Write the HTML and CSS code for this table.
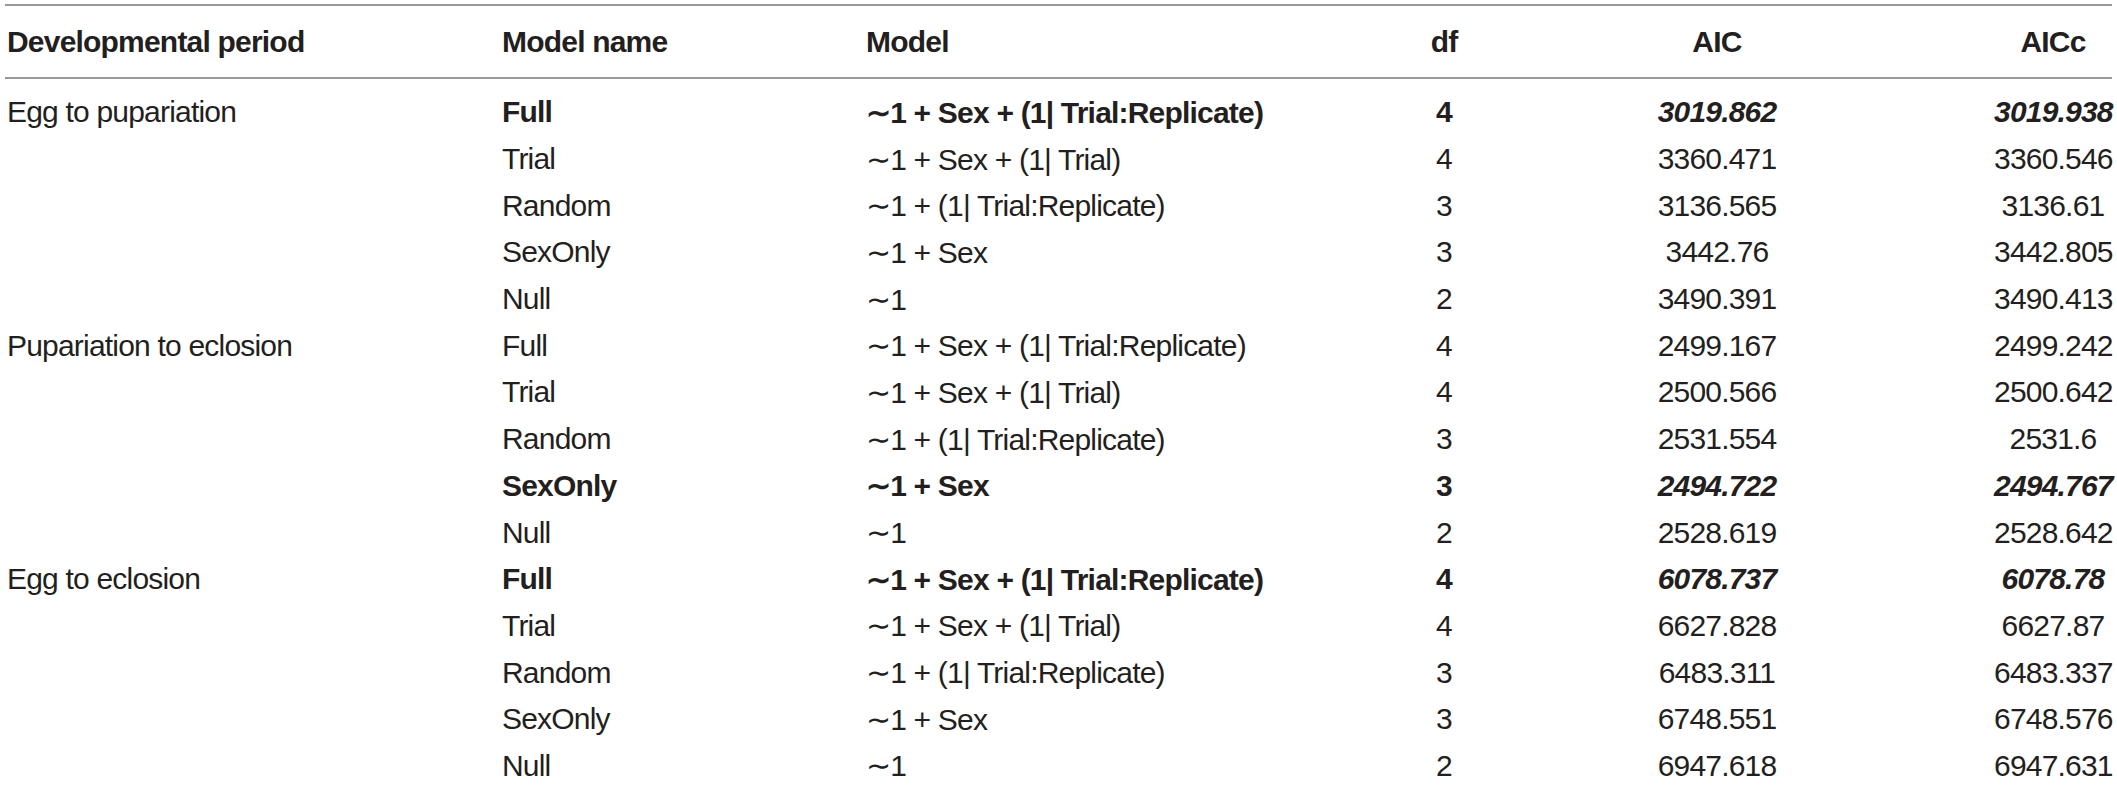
FILE: index.html
```html
<!DOCTYPE html>
<html lang="en">
<head>
<meta charset="utf-8">
<title>Model comparison</title>
<link rel="stylesheet" href="styles.css">
</head>
<body>
<div class="table">
  <div class="row head">
    <div class="c period">Developmental period</div>
    <div class="c name">Model name</div>
    <div class="c model">Model</div>
    <div class="c num df">df</div>
    <div class="c num aic">AIC</div>
    <div class="c num aicc">AICc</div>
  </div>
  <div class="body">
    <div class="row best">
      <div class="c period plain">Egg to pupariation</div>
      <div class="c name">Full</div>
      <div class="c model">∼1 + Sex + (1| Trial:Replicate)</div>
      <div class="c num df">4</div>
      <div class="c num aic it">3019.862</div>
      <div class="c num aicc it">3019.938</div>
    </div>
    <div class="row">
      <div class="c period"></div>
      <div class="c name">Trial</div>
      <div class="c model">∼1 + Sex + (1| Trial)</div>
      <div class="c num df">4</div>
      <div class="c num aic">3360.471</div>
      <div class="c num aicc">3360.546</div>
    </div>
    <div class="row">
      <div class="c period"></div>
      <div class="c name">Random</div>
      <div class="c model">∼1 + (1| Trial:Replicate)</div>
      <div class="c num df">3</div>
      <div class="c num aic">3136.565</div>
      <div class="c num aicc">3136.61</div>
    </div>
    <div class="row">
      <div class="c period"></div>
      <div class="c name">SexOnly</div>
      <div class="c model">∼1 + Sex</div>
      <div class="c num df">3</div>
      <div class="c num aic">3442.76</div>
      <div class="c num aicc">3442.805</div>
    </div>
    <div class="row">
      <div class="c period"></div>
      <div class="c name">Null</div>
      <div class="c model">∼1</div>
      <div class="c num df">2</div>
      <div class="c num aic">3490.391</div>
      <div class="c num aicc">3490.413</div>
    </div>
    <div class="row">
      <div class="c period">Pupariation to eclosion</div>
      <div class="c name">Full</div>
      <div class="c model">∼1 + Sex + (1| Trial:Replicate)</div>
      <div class="c num df">4</div>
      <div class="c num aic">2499.167</div>
      <div class="c num aicc">2499.242</div>
    </div>
    <div class="row">
      <div class="c period"></div>
      <div class="c name">Trial</div>
      <div class="c model">∼1 + Sex + (1| Trial)</div>
      <div class="c num df">4</div>
      <div class="c num aic">2500.566</div>
      <div class="c num aicc">2500.642</div>
    </div>
    <div class="row">
      <div class="c period"></div>
      <div class="c name">Random</div>
      <div class="c model">∼1 + (1| Trial:Replicate)</div>
      <div class="c num df">3</div>
      <div class="c num aic">2531.554</div>
      <div class="c num aicc">2531.6</div>
    </div>
    <div class="row best">
      <div class="c period plain"></div>
      <div class="c name">SexOnly</div>
      <div class="c model">∼1 + Sex</div>
      <div class="c num df">3</div>
      <div class="c num aic it">2494.722</div>
      <div class="c num aicc it">2494.767</div>
    </div>
    <div class="row">
      <div class="c period"></div>
      <div class="c name">Null</div>
      <div class="c model">∼1</div>
      <div class="c num df">2</div>
      <div class="c num aic">2528.619</div>
      <div class="c num aicc">2528.642</div>
    </div>
    <div class="row best">
      <div class="c period plain">Egg to eclosion</div>
      <div class="c name">Full</div>
      <div class="c model">∼1 + Sex + (1| Trial:Replicate)</div>
      <div class="c num df">4</div>
      <div class="c num aic it">6078.737</div>
      <div class="c num aicc it">6078.78</div>
    </div>
    <div class="row">
      <div class="c period"></div>
      <div class="c name">Trial</div>
      <div class="c model">∼1 + Sex + (1| Trial)</div>
      <div class="c num df">4</div>
      <div class="c num aic">6627.828</div>
      <div class="c num aicc">6627.87</div>
    </div>
    <div class="row">
      <div class="c period"></div>
      <div class="c name">Random</div>
      <div class="c model">∼1 + (1| Trial:Replicate)</div>
      <div class="c num df">3</div>
      <div class="c num aic">6483.311</div>
      <div class="c num aicc">6483.337</div>
    </div>
    <div class="row">
      <div class="c period"></div>
      <div class="c name">SexOnly</div>
      <div class="c model">∼1 + Sex</div>
      <div class="c num df">3</div>
      <div class="c num aic">6748.551</div>
      <div class="c num aicc">6748.576</div>
    </div>
    <div class="row">
      <div class="c period"></div>
      <div class="c name">Null</div>
      <div class="c model">∼1</div>
      <div class="c num df">2</div>
      <div class="c num aic">6947.618</div>
      <div class="c num aicc">6947.631</div>
    </div>
  </div>
</div>
</body>
</html>
```

FILE: styles.css
```css
html, body {
  margin: 0;
  padding: 0;
  background: #ffffff;
}

body {
  font-family: "Liberation Sans", Arial, Helvetica, sans-serif;
  font-size: 30px;
  letter-spacing: -0.8px;
  color: #231f20;
}

.table {
  margin: 4px 0 0 5px;
  width: 2107px;
  border-top: 2px solid #999999;
}

.row {
  display: grid;
  grid-template-columns: 495px 364px 520px 120px 333px 1fr;
  align-items: center;
}

.head {
  height: 71px;
  font-weight: bold;
}

.body {
  border-top: 2px solid #999999;
  padding-top: 10px;
}

.body .row {
  height: 46.7px;
}

.c {
  padding-left: 2px;
  white-space: nowrap;
}

.num {
  text-align: center;
  padding-left: 0;
}

.df {
  padding: 0;
}

.aic {
  padding-left: 93px;
}

.aicc {
  padding-left: 157px;
}

.best .c {
  font-weight: bold;
}

.best .c.plain {
  font-weight: normal;
}

.it {
  font-style: italic;
}
```
